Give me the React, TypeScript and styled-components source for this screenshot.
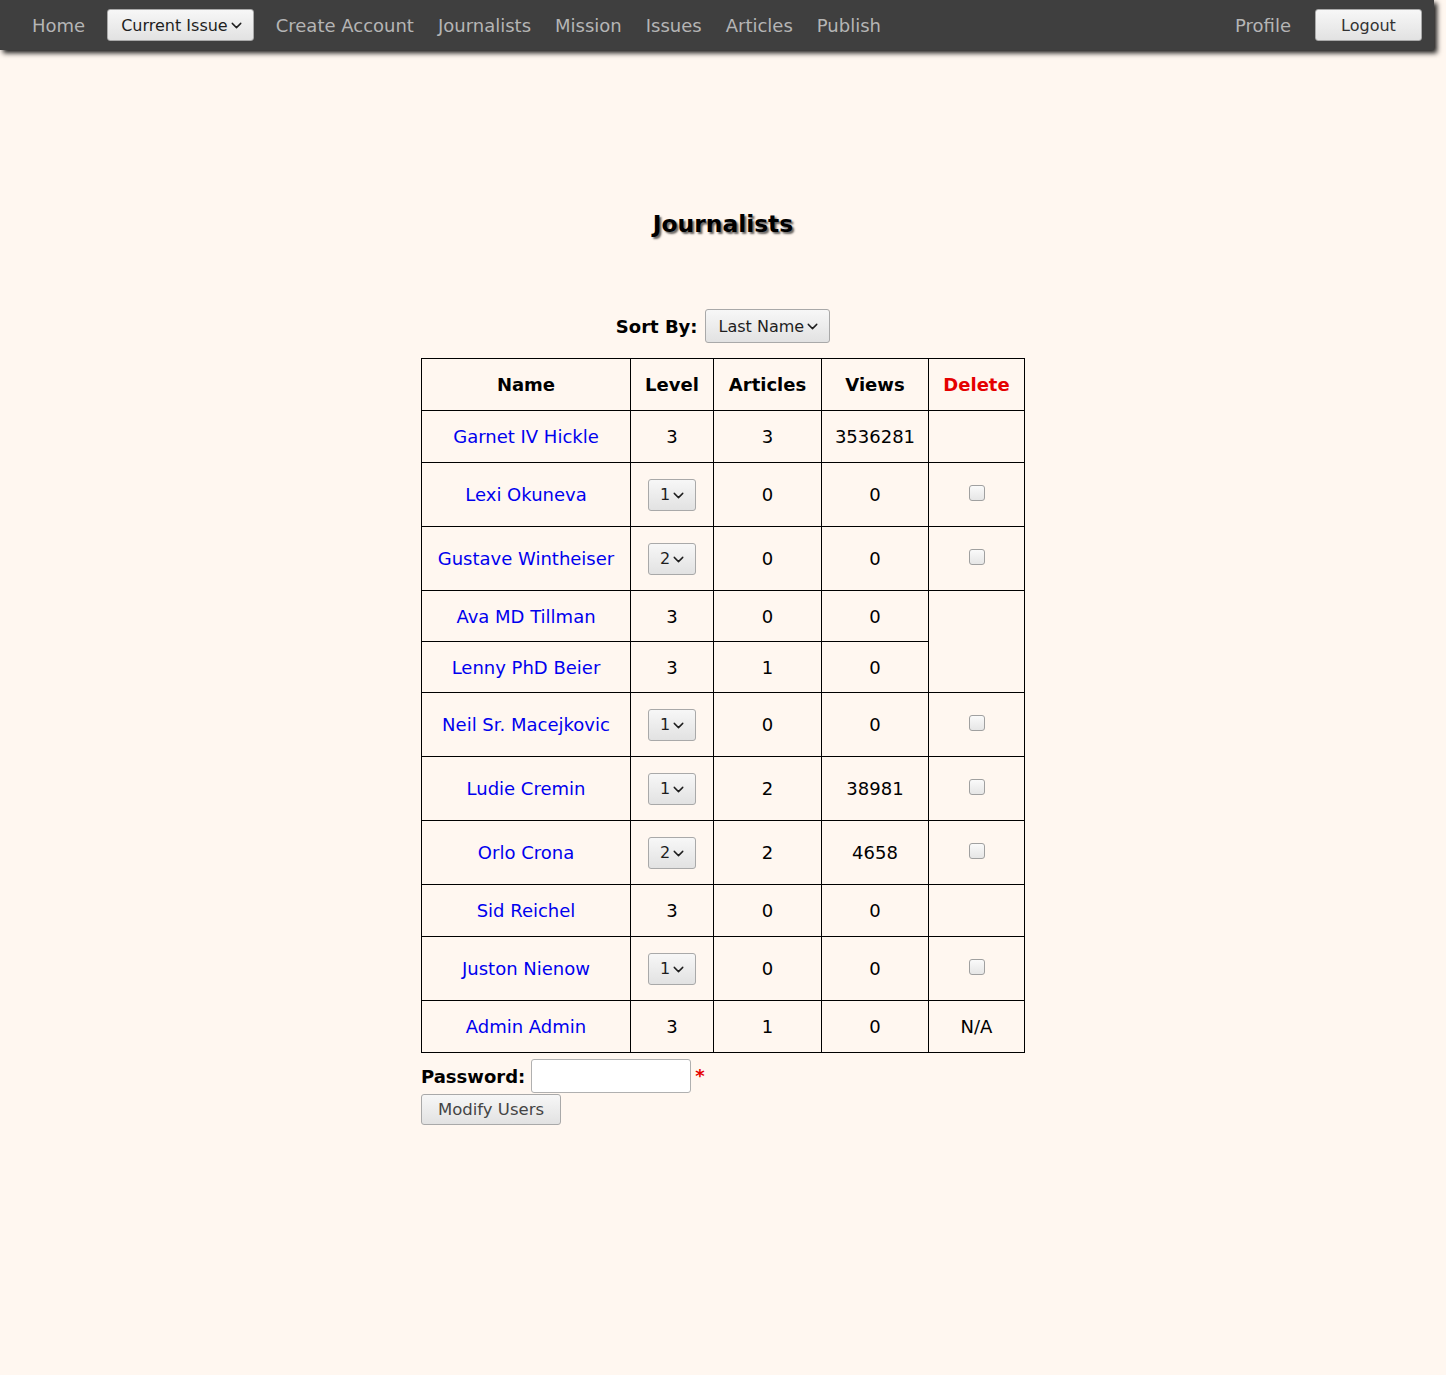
import React from 'react';
import styled, { createGlobalStyle } from 'styled-components';
import { ChevronDown } from 'lucide-react';

const GlobalStyle = createGlobalStyle`
  html, body {
    margin: 0;
    padding: 0;
    background: #fff7f0;
    font-family: 'DejaVu Sans', 'Liberation Sans', sans-serif;
    font-size: 18px;
    color: #000;
  }
`;

const NavBar = styled.nav`
  width: calc(100% - 12px);
  height: 50px;
  background: #3f3f3f;
  box-shadow: 3px 3px 5px rgba(0, 0, 0, 0.9);
  display: flex;
  align-items: center;
  padding: 0 12px 0 20px;
  box-sizing: border-box;
`;

const NavGroup = styled.div<{ $right?: boolean }>`
  display: flex;
  align-items: center;
  margin-left: ${(p) => (p.$right ? 'auto' : '0')};
`;

const NavLink = styled.a`
  color: #b5b5b5;
  text-decoration: none;
  padding: 1px 12px 0;
  line-height: 49px;
`;

const SelectBox = styled.div<{ $h?: number }>`
  display: inline-flex;
  align-items: center;
  height: ${(p) => p.$h ?? 32}px;
  box-sizing: border-box;
  padding: 0 8px 0 13px;
  border: 1px solid #a9a9a9;
  border-radius: 3px;
  background: linear-gradient(#f7f7f7, #e2e2e2);
  color: #1e1e1e;
  font-size: 16px;
  font-weight: normal;
  cursor: pointer;
  svg {
    margin-left: 0;
    margin-top: 1px;
  }
`;

const NavSelect = styled(SelectBox)`
  margin: 0 10px;
`;

const Button = styled.button`
  height: 32px;
  box-sizing: border-box;
  border: 1px solid #a9a9a9;
  border-radius: 3px;
  background: linear-gradient(#f7f7f7, #e2e2e2);
  font-family: inherit;
  font-size: 16px;
  color: #333;
  padding: 0 16px;
  cursor: pointer;
`;

const LogoutButton = styled(Button)`
  width: 107px;
  margin-left: 12px;
`;

const Main = styled.main`
  display: flex;
  flex-direction: column;
  align-items: center;
  padding-top: 160px;
  padding-bottom: 250px;
`;

const Title = styled.h1`
  margin: 0;
  font-size: 23.4px;
  line-height: 28px;
  font-weight: bold;
  text-shadow: 2px 2px 2px rgba(0, 0, 0, 0.6);
`;

const SortRow = styled.div`
  display: flex;
  align-items: center;
  gap: 7px;
  margin-top: 71px;
  margin-bottom: 15px;
  font-weight: bold;
`;

const FormBlock = styled.form`
  width: 604px;
`;

const Table = styled.table`
  table-layout: fixed;
  border-collapse: collapse;
  border: 1px solid #000;
`;

const Th = styled.th<{ $w: number; $danger?: boolean }>`
  width: ${(p) => p.$w}px;
  height: 51px;
  padding: 0;
  border: 1px solid #000;
  text-align: center;
  font-weight: bold;
  color: ${(p) => (p.$danger ? '#e50000' : '#000')};
`;

const Td = styled.td<{ $h: number }>`
  height: ${(p) => p.$h}px;
  padding: 0;
  border: 1px solid #000;
  text-align: center;
  vertical-align: middle;
`;

const NameLink = styled.a`
  color: #0000ee;
  text-decoration: none;
`;

const LevelSelect = styled(SelectBox)`
  width: 48px;
  padding: 0 0 0 11px;
  vertical-align: middle;
`;

const Check = styled.input`
  appearance: none;
  width: 16px;
  height: 16px;
  margin: 0;
  border: 1px solid #a0a0a0;
  border-radius: 3px;
  background: linear-gradient(#fafafa, #e6e6e6);
  vertical-align: middle;
  position: relative;
  top: -3px;
`;

const PasswordRow = styled.div`
  display: flex;
  align-items: center;
  margin-top: 6px;
`;

const Label = styled.label`
  font-weight: bold;
  margin-right: 6px;
`;

const PasswordInput = styled.input`
  width: 160px;
  height: 34px;
  box-sizing: border-box;
  border: 1px solid #b0b0b0;
  border-radius: 3px;
  background: #fff;
`;

const Required = styled.span`
  color: #e50000;
  font-weight: bold;
  margin-left: 4px;
  position: relative;
  top: -1px;
`;

const SubmitButton = styled(Button)`
  display: block;
  width: 140px;
  height: 31px;
  margin-top: 1px;
  padding: 0;
  font-size: 16.5px;
  color: #444;
`;

type Row = {
  name: string;
  level: number;
  editable: boolean;
  articles: number;
  views: number;
  del: 'check' | 'empty' | 'na' | 'span' | 'none';
};

const rows: Row[] = [
  { name: 'Garnet IV Hickle', level: 3, editable: false, articles: 3, views: 3536281, del: 'empty' },
  { name: 'Lexi Okuneva', level: 1, editable: true, articles: 0, views: 0, del: 'check' },
  { name: 'Gustave Wintheiser', level: 2, editable: true, articles: 0, views: 0, del: 'check' },
  { name: 'Ava MD Tillman', level: 3, editable: false, articles: 0, views: 0, del: 'span' },
  { name: 'Lenny PhD Beier', level: 3, editable: false, articles: 1, views: 0, del: 'none' },
  { name: 'Neil Sr. Macejkovic', level: 1, editable: true, articles: 0, views: 0, del: 'check' },
  { name: 'Ludie Cremin', level: 1, editable: true, articles: 2, views: 38981, del: 'check' },
  { name: 'Orlo Crona', level: 2, editable: true, articles: 2, views: 4658, del: 'check' },
  { name: 'Sid Reichel', level: 3, editable: false, articles: 0, views: 0, del: 'empty' },
  { name: 'Juston Nienow', level: 1, editable: true, articles: 0, views: 0, del: 'check' },
  { name: 'Admin Admin', level: 3, editable: false, articles: 1, views: 0, del: 'na' },
];

const Chevron = () => <ChevronDown size={17} strokeWidth={2} />;

const rowHeight = (r: Row) => (r.editable ? 63 : r.del === 'span' || r.del === 'none' ? 50 : 51);

const App: React.FC = () => {
  return (
    <>
      <GlobalStyle />
      <NavBar>
        <NavGroup>
          <NavLink href="#">Home</NavLink>
          <NavSelect>
            Current Issue
            <Chevron />
          </NavSelect>
          <NavLink href="#">Create Account</NavLink>
          <NavLink href="#">Journalists</NavLink>
          <NavLink href="#">Mission</NavLink>
          <NavLink href="#">Issues</NavLink>
          <NavLink href="#">Articles</NavLink>
          <NavLink href="#">Publish</NavLink>
        </NavGroup>
        <NavGroup $right>
          <NavLink href="#">Profile</NavLink>
          <LogoutButton type="button">Logout</LogoutButton>
        </NavGroup>
      </NavBar>

      <Main>
        <Title>Journalists</Title>
        <SortRow>
          Sort By:
          <SelectBox $h={34}>
            Last Name
            <Chevron />
          </SelectBox>
        </SortRow>

        <FormBlock onSubmit={(e) => e.preventDefault()}>
          <Table>
            <thead>
              <tr>
                <Th $w={208}>Name</Th>
                <Th $w={82}>Level</Th>
                <Th $w={107}>Articles</Th>
                <Th $w={106}>Views</Th>
                <Th $w={95} $danger>
                  Delete
                </Th>
              </tr>
            </thead>
            <tbody>
              {rows.map((r) => {
                const h = rowHeight(r);
                return (
                  <tr key={r.name}>
                    <Td $h={h}>
                      <NameLink href="#">{r.name}</NameLink>
                    </Td>
                    <Td $h={h}>
                      {r.editable ? (
                        <LevelSelect>
                          {r.level}
                          <Chevron />
                        </LevelSelect>
                      ) : (
                        r.level
                      )}
                    </Td>
                    <Td $h={h}>{r.articles}</Td>
                    <Td $h={h}>{r.views}</Td>
                    {r.del === 'check' && (
                      <Td $h={h}>
                        <Check type="checkbox" />
                      </Td>
                    )}
                    {r.del === 'empty' && <Td $h={h} />}
                    {r.del === 'na' && <Td $h={h}>N/A</Td>}
                    {r.del === 'span' && <Td $h={h} rowSpan={2} />}
                  </tr>
                );
              })}
            </tbody>
          </Table>
          <PasswordRow>
            <Label>Password:</Label>
            <PasswordInput type="password" />
            <Required>*</Required>
          </PasswordRow>
          <SubmitButton type="submit">Modify Users</SubmitButton>
        </FormBlock>
      </Main>
    </>
  );
};

export default App;
